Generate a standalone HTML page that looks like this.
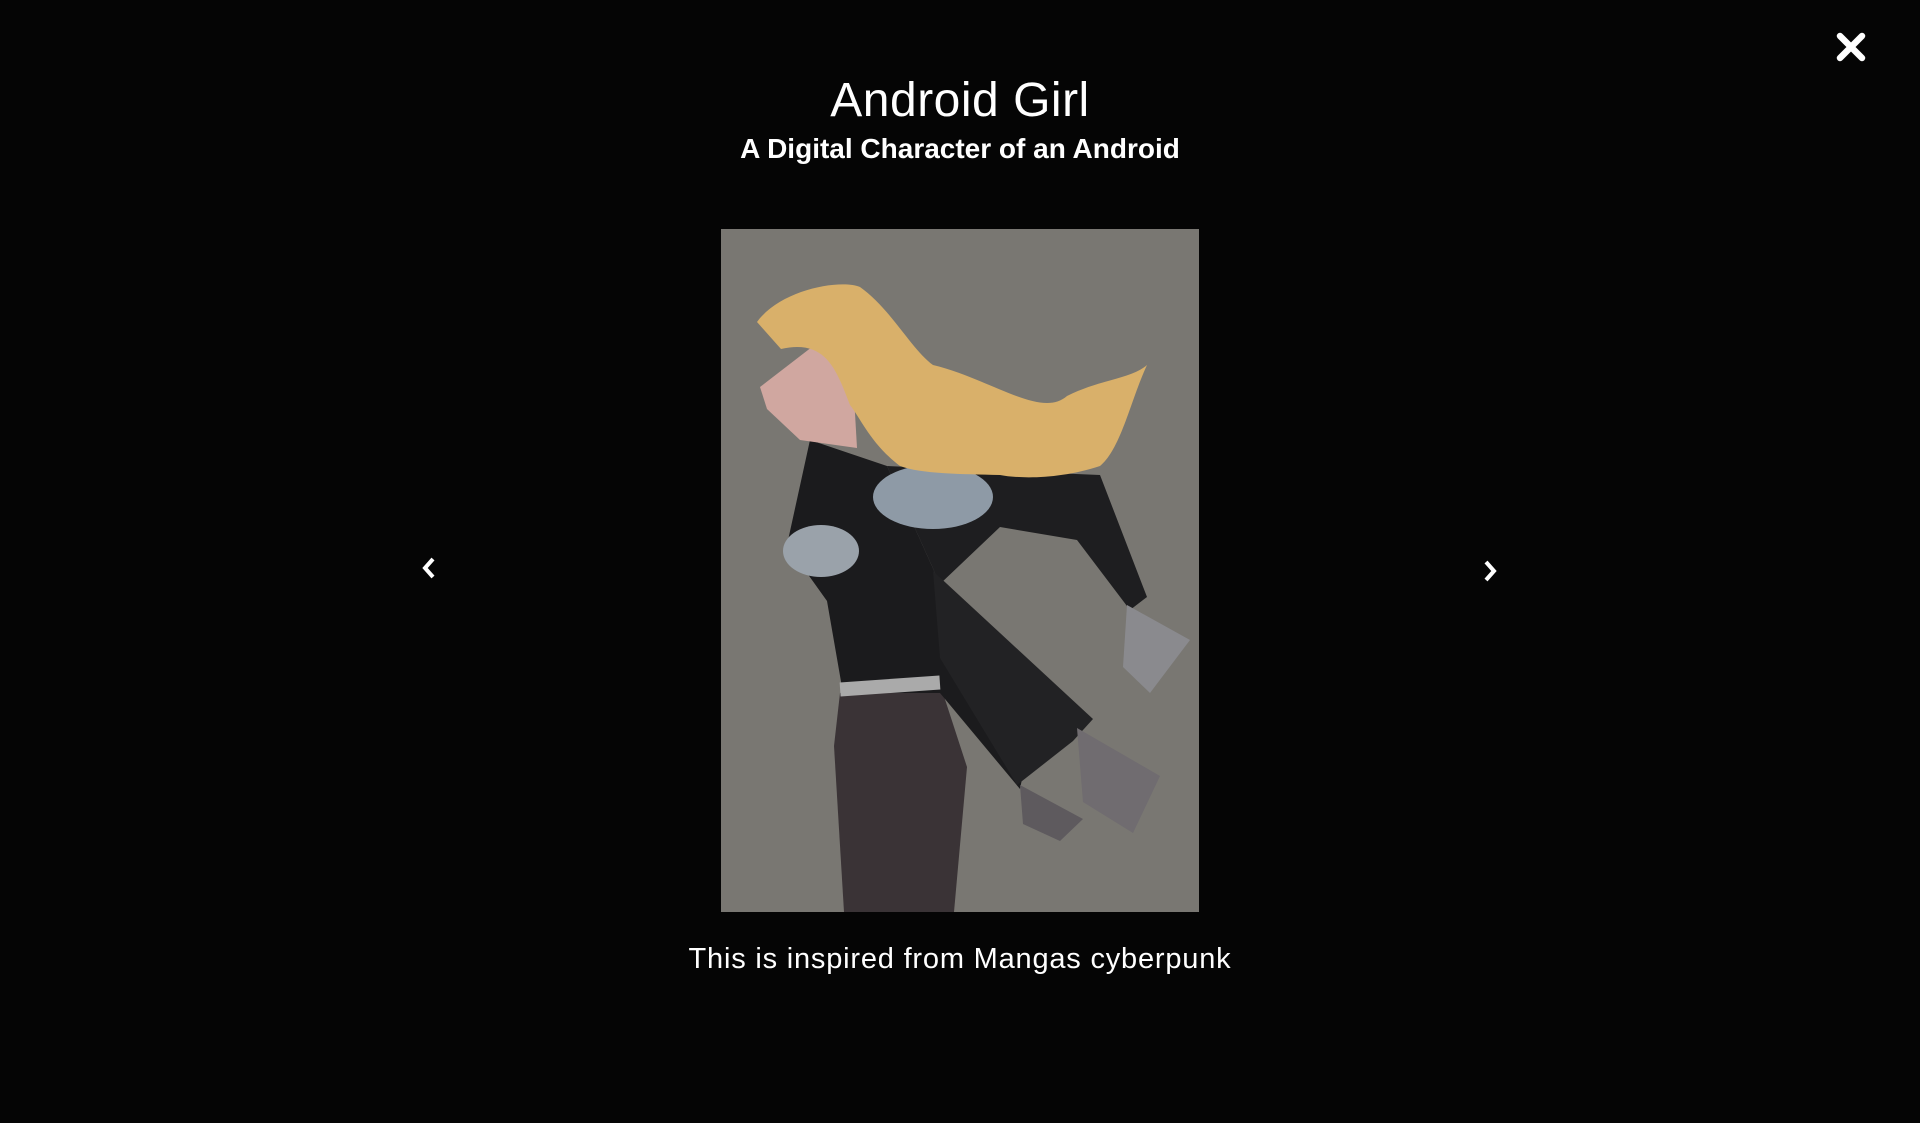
<!DOCTYPE html>
<html><head><meta charset="utf-8"><style>
html,body{margin:0;padding:0;background:#050505;width:1920px;height:1123px;overflow:hidden;font-family:"Liberation Sans",sans-serif;color:#fff}
.t{position:absolute;left:0;width:1920px;text-align:center}
</style></head><body>
<div class="t" style="top:73px;font-size:48px;font-weight:500;letter-spacing:0.5px">Android Girl</div>
<div class="t" style="top:133px;font-size:28px;font-weight:bold">A Digital Character of an Android</div>
<svg style="position:absolute;left:721px;top:229px" width="478" height="683" viewBox="0 0 478 683">
<rect width="478" height="683" fill="#797772"/>
<polygon fill="#3a3336" points="119,464 219,455 246,538 233,683 123,683 113,517"/>
<polygon fill="#1b1b1d" points="66,316 89,211 166,237 219,355 313,490 299,560 219,464 122,464 106,372"/>
<polygon fill="#1e1e20" points="166,237 379,246 426,368 409,381 356,311 279,298 219,355"/>
<polygon fill="#222224" points="212,342 372,490 352,512 296,556 219,429"/>
<polygon fill="#8a8a8e" points="406,376 469,411 429,464 402,438"/>
<polygon fill="#706c70" points="356,499 439,547 412,604 362,573"/>
<polygon fill="#5e5a5e" points="299,556 362,590 339,612 302,595"/>
<ellipse cx="212" cy="268" rx="60" ry="32" fill="#8e9aa6"/>
<ellipse cx="100" cy="322" rx="38" ry="26" fill="#9aa2aa"/>
<polygon fill="#d0a7a0" points="39,158 113,101 133,167 136,219 79,211 46,180"/>
<path fill="#d9b06a" d="M36,93 C60,60 120,50 139,58 C170,80 190,120 212,136 C270,150 320,190 346,167 C380,150 410,150 426,136 C410,170 400,220 379,237 C340,250 300,250 279,246 C240,245 200,245 179,237 C150,215 140,190 129,176 C115,140 105,110 60,120 Z"/>
<rect x="119" y="450" width="100" height="14" fill="#aaa" transform="rotate(-4 169 457)"/>
</svg>
<div class="t" style="top:943px;font-size:29px;letter-spacing:0.8px">This is inspired from Mangas cyberpunk</div>
<svg style="position:absolute;left:419px;top:556px" width="20" height="24" viewBox="0 0 20 24"><path d="M14 3 L6 12 L14 21" stroke="#fff" stroke-width="4" fill="none"/></svg>
<svg style="position:absolute;left:1480px;top:559px" width="20" height="24" viewBox="0 0 20 24"><path d="M6 3 L14 12 L6 21" stroke="#fff" stroke-width="4" fill="none"/></svg>
<svg style="position:absolute;left:1835px;top:31px" width="32" height="32" viewBox="0 0 32 32"><path d="M5 5 L27 27 M27 5 L5 27" stroke="#fff" stroke-width="6.5" stroke-linecap="round"/></svg>
</body></html>
